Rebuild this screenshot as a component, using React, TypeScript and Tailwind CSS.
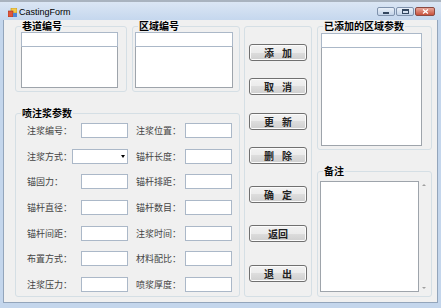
import type { ReactNode } from "react";

const cjk = "font-['Noto_Sans_CJK_SC','Noto_Sans_CJK_JP',sans-serif]";

function GroupBox({ title, className, children }: { title?: string; className: string; children?: ReactNode }) {
  return (
    <fieldset className={`border border-[#d5dfe5] rounded-[3px] ${className}`}>
      {title && (
        <legend className={`ml-[5px] px-[1px] text-[10px] leading-[12px] font-bold text-black ${cjk}`}>
          {title}
        </legend>
      )}
      {children}
    </fieldset>
  );
}

function TextBox({ className = "" }: { className?: string }) {
  return <div className={`h-[15px] border border-[#abb8c8] bg-white ${className}`} />;
}

function ComboBox() {
  return (
    <div className="h-[15px] w-[56px] border border-[#abb8c8] bg-white flex items-center justify-end pr-[2px]">
      <div className="w-0 h-0 border-l-[2.5px] border-r-[2.5px] border-t-[3px] border-l-transparent border-r-transparent border-t-black" />
    </div>
  );
}

function Label({ text, className }: { text: string; className: string }) {
  return (
    <span className={`text-[9px] leading-[15px] text-[#444] whitespace-nowrap ${cjk} ${className}`}>
      {text}
    </span>
  );
}

const rows: { left: string; right: string; combo?: boolean; focus?: boolean }[] = [
  { left: "注浆编号：", right: "注浆位置：" },
  { left: "注浆方式：", right: "锚杆长度：", combo: true },
  { left: "锚固力：", right: "锚杆排距：" },
  { left: "锚杆直径：", right: "锚杆数目：" },
  { left: "锚杆间距：", right: "注浆时间：" },
  { left: "布置方式：", right: "材料配比：" },
  { left: "注浆压力：", right: "喷浆厚度：", focus: true },
];

const buttons: { chars: string[]; mt: string }[] = [
  { chars: ["添", "加"], mt: "mt-[17px]" },
  { chars: ["取", "消"], mt: "mt-[17px]" },
  { chars: ["更", "新"], mt: "mt-[18px]" },
  { chars: ["删", "除"], mt: "mt-[17px]" },
  { chars: ["确", "定"], mt: "mt-[22px]" },
  { chars: ["返回"], mt: "mt-[22px]" },
  { chars: ["退", "出"], mt: "mt-[23px]" },
];

function FormButton({ chars, mt }: { chars: string[]; mt: string }) {
  return (
    <div
      className={`${mt} ml-[4px] w-[58px] h-[17px] rounded-[3px] border border-[#707070] bg-[linear-gradient(#f2f2f2_0%,#ebebeb_50%,#dddddd_50%,#cfcfcf_100%)] shadow-[inset_0_0_0_1px_#fbfbfb] flex items-center justify-center gap-[8px] text-[10px] leading-[12px] font-bold text-[#222] ${cjk}`}
    >
      {chars.map((c) => (
        <span key={c}>{c}</span>
      ))}
    </div>
  );
}

function CaptionButton({ kind }: { kind: "min" | "max" | "close" }) {
  if (kind === "close") {
    return (
      <div className="w-[20px] h-[9px] rounded-[2px] border border-[#8a4a42] bg-[linear-gradient(#e8a79a,#c8513c)] flex items-center justify-center">
        <svg width="7" height="5" viewBox="0 0 7 5">
          <path d="M1 0.5 L6 4.5 M6 0.5 L1 4.5" stroke="white" strokeWidth="1.3" />
        </svg>
      </div>
    );
  }
  return (
    <div className="w-[18px] h-[9px] rounded-[2px] border border-[#7f92ad] bg-[linear-gradient(#e9f0f9,#c3d3e8)] flex items-center justify-center">
      {kind === "min" ? (
        <div className="w-[6px] h-[2px] mt-[3px] bg-[#33465f]" />
      ) : (
        <div className="w-[7px] h-[5px] border border-[#33465f] border-t-2" />
      )}
    </div>
  );
}

export default function App() {
  return (
    <div className="w-[441px] h-[308px] flex flex-col bg-[#c4d6ec] border-t-2 border-[#a9b3bf] overflow-hidden">
      {/* Title bar */}
      <div className="h-[18px] flex items-start pl-[8px] pr-[6px] bg-[linear-gradient(#dbe6f4,#c5d7ee)]">
        <svg width="9" height="9" viewBox="0 0 9 9" className="mt-[6px]">
          <rect x="3" y="0" width="6" height="5" fill="#f2c94c" stroke="#b8901f" strokeWidth="0.6" />
          <rect x="0" y="3" width="5" height="6" fill="#e0573b" stroke="#9b2f1e" strokeWidth="0.6" />
          <rect x="5" y="5" width="4" height="4" fill="#4f86d6" />
        </svg>
        <span className="mt-[4px] ml-[2px] text-[9px] leading-[12px] text-black font-['Liberation_Sans',sans-serif]">
          CastingForm
        </span>
        <div className="ml-auto mt-[5px] flex gap-[1px]">
          <CaptionButton kind="min" />
          <CaptionButton kind="max" />
          <CaptionButton kind="close" />
        </div>
      </div>

      {/* Client area */}
      <div className="flex-1 flex px-[3px] pb-[5px]">
        <div className="flex-1 bg-[#f0f0f0] border border-t-0 border-[#93a5bb] flex pl-[11px]">
          {/* Left column */}
          <div className="w-[225px] flex flex-col">
            <div className="flex">
              <GroupBox title="巷道编号" className="w-[112px] h-[72px]">
                <TextBox className="ml-[5px] w-[97px]" />
                <div className="ml-[5px] w-[97px] h-[41px] border border-[#9ea4ab] border-t-0 bg-white" />
              </GroupBox>
              <GroupBox title="区域编号" className="ml-[5px] w-[108px] h-[72px]">
                <TextBox className="ml-[2px] w-[98px]" />
                <div className="ml-[2px] w-[98px] h-[41px] border border-[#9ea4ab] border-t-0 bg-white" />
              </GroupBox>
            </div>
            <GroupBox title="喷注浆参数" className="mt-[15px] w-[225px] h-[190px]">
              <div className="pt-[4px] pl-[11px] flex flex-col gap-[10.67px]">
                {rows.map((r) => (
                  <div key={r.left} className="flex h-[15px]">
                    <Label text={r.left} className={r.combo ? "w-[45px]" : "w-[54px]"} />
                    {r.combo ? <ComboBox /> : <TextBox className="w-[47px]" />}
                    <Label text={r.right} className="ml-[8px] w-[49px]" />
                    <TextBox className={`w-[47px] ${r.focus ? "border-[#6fa3dc]" : ""}`} />
                  </div>
                ))}
              </div>
            </GroupBox>
          </div>

          {/* Buttons */}
          <GroupBox className="ml-[4px] mt-[6px] w-[68px] h-[271px]">
            <div className="flex flex-col">
              {buttons.map((b) => (
                <FormButton key={b.chars.join("")} chars={b.chars} mt={b.mt} />
              ))}
            </div>
          </GroupBox>

          {/* Right column */}
          <div className="ml-[5px] w-[115px] flex flex-col">
            <GroupBox title="已添加的区域参数" className="w-[115px] h-[130px]">
              <TextBox className="ml-[3px] mt-[1px] w-[101px]" />
              <div className="ml-[3px] w-[101px] h-[98px] border border-[#9ea4ab] border-t-0 bg-white" />
            </GroupBox>
            <GroupBox title="备注" className="mt-[15px] w-[115px] h-[132px]">
              <div className="flex mt-[4px]">
                <div className="ml-[2px] w-[99px] h-[111px] border border-[#9ea4ab] bg-white" />
                <div className="ml-[3px] w-[5px] flex flex-col justify-between py-[3px]">
                  <div className="w-0 h-0 border-l-[2px] border-r-[2px] border-b-[2px] border-l-transparent border-r-transparent border-b-[#a0a0a0]" />
                  <div className="w-0 h-0 border-l-[2px] border-r-[2px] border-t-[2px] border-l-transparent border-r-transparent border-t-[#a0a0a0]" />
                </div>
              </div>
            </GroupBox>
          </div>
        </div>
      </div>
    </div>
  );
}
